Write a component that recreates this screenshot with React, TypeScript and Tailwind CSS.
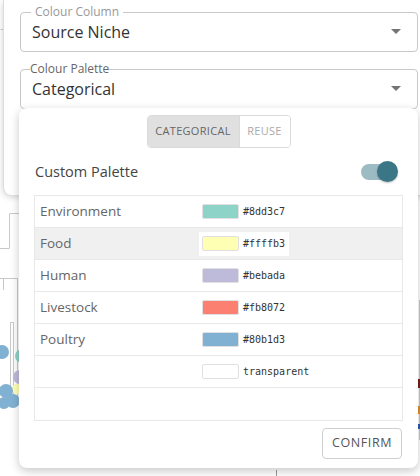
import { useState } from "react";

const rows = [
  { name: "Environment", color: "#8dd3c7" },
  { name: "Food", color: "#ffffb3" },
  { name: "Human", color: "#bebada" },
  { name: "Livestock", color: "#fb8072" },
  { name: "Poultry", color: "#80b1d3" },
  { name: "", color: "transparent" },
];

export default function App() {
  const [mode, setMode] = useState("categorical");
  const [custom, setCustom] = useState(true);

  return (
    <div className="relative h-[476px] w-[420px] overflow-hidden bg-white font-['Open_Sans',sans-serif]">
      <Backdrop />

      {/* settings card */}
      <div className="relative ml-[3px] h-[195px] w-[431px] rounded-bl-lg border-l border-[#dcdcdc] bg-white px-4 pt-3 shadow-[0_2px_6px_rgba(0,0,0,0.18)]">
        <Field label="Colour Column" value="Source Niche" />
        <div className="mt-[17px]">
          <Field label="Colour Palette" value="Categorical" tight />
        </div>
      </div>

      {/* palette menu */}
      <div className="absolute left-[19px] top-[108px] flex h-[360px] w-[399px] flex-col rounded-lg bg-white px-[15px] shadow-[0_3px_10px_rgba(0,0,0,0.22)]">
        <div className="mt-[7px] flex justify-center">
          <div className="flex h-[33px] overflow-hidden rounded border border-[#dadada] text-[11px] tracking-[0.3px]">
            <button
              onClick={() => setMode("categorical")}
              className={
                mode === "categorical"
                  ? "w-[91px] bg-[#e0e0e0] text-[#666]"
                  : "w-[91px] bg-white text-[#aaa]"
              }
            >
              CATEGORICAL
            </button>
            <button
              onClick={() => setMode("reuse")}
              className={
                mode === "reuse"
                  ? "w-[51px] border-l border-[#dadada] bg-[#e0e0e0] text-[#666]"
                  : "w-[51px] border-l border-[#dadada] bg-white text-[#aaa]"
              }
            >
              REUSE
            </button>
          </div>
        </div>

        <div className="mt-[13px] flex h-[22px] items-center justify-between pl-[1px] pr-[8px]">
          <span className="text-[14.5px] text-[#444]">Custom Palette</span>
          <button
            onClick={() => setCustom(!custom)}
            className="relative h-[16px] w-[34px] rounded-full bg-[#9dbbc3]"
          >
            <span className="absolute right-[-3px] top-[-3px] h-[21px] w-[21px] rounded-full bg-[#3b7686] shadow-[0_1px_2px_rgba(0,0,0,0.25)]" />
          </button>
        </div>

        <div className="mt-[12px] h-[226px] border border-[#e8e8e8]">
          {rows.map((r, i) => (
            <div
              key={i}
              className={
                i === 1
                  ? "flex h-[32px] items-center border-b border-[#e8e8e8] bg-[#f0f0f0]"
                  : "flex h-[32px] items-center border-b border-[#e8e8e8]"
              }
            >
              <div className="w-[164px] pl-[5px] text-[13.5px] text-[#666]">{r.name}</div>
              <div
                className={
                  i === 1
                    ? "flex h-[24px] items-center gap-[4px] bg-white pl-[3px] pr-[4px]"
                    : "flex h-[24px] items-center gap-[4px] pl-[3px]"
                }
              >
                <span
                  className="h-[15px] w-[37px] rounded-[2px] border border-[#e0e0e0]"
                  style={{ backgroundColor: r.color }}
                />
                <span className="font-['DejaVu_Sans_Mono',monospace] text-[10px] text-[#333]">
                  {r.color}
                </span>
              </div>
            </div>
          ))}
        </div>

        <div className="mt-[7px] flex justify-end pr-[1px]">
          <button className="h-[31px] w-[80px] rounded border border-[#cfcfcf] text-[12.5px] tracking-[0.6px] text-[#555]">
            CONFIRM
          </button>
        </div>
      </div>
    </div>
  );
}

function Field({
  label,
  value,
  tight,
}: {
  label: string;
  value: string;
  tight?: boolean;
}) {
  return (
    <div className="relative flex h-[40px] items-center rounded border border-[#c8c8c8] pl-[11px] pr-[16px]">
      <span
        className={
          tight
            ? "absolute left-[9px] top-[-9px] bg-white text-[12px] leading-[16px] text-[#666]"
            : "absolute left-[10px] top-[-9px] bg-white px-[4px] text-[12px] leading-[16px] text-[#999]"
        }
      >
        {label}
      </span>
      <span className="flex-1 text-[16px] text-[#333]">{value}</span>
      <svg width="10" height="5" viewBox="0 0 10 5" className="mb-[1px]">
        <path d="M0 0 L10 0 L5 5 Z" fill="#757575" />
      </svg>
    </div>
  );
}

// tree diagram peeking out behind the menu
function Backdrop() {
  return (
    <svg
      width="420"
      height="476"
      className="absolute left-0 top-0"
      fill="none"
      stroke="#c9c9c9"
      strokeWidth="1"
    >
      <path d="M0.5 29.5 H3" />
      <path d="M9.5 248 V213.5 H30" />
      <path d="M0 248.5 H9.5" />
      <path d="M0 278.5 H17.5 V400" />
      <path d="M3.5 278 V290" />
      <path d="M10.5 322 V395 M13.5 322 V395 M10.5 322.5 H13.5" />
      <circle cx="2" cy="352" r="7" fill="#80b1d3" stroke="none" />
      <circle cx="22" cy="356" r="7" fill="#8dd3c7" stroke="none" />
      <circle cx="20" cy="377" r="7" fill="#bebada" stroke="none" />
      <circle cx="17" cy="389" r="5" fill="#ffffb3" stroke="none" />
      <circle cx="6" cy="391" r="7" fill="#80b1d3" stroke="none" />
      <circle cx="13" cy="401" r="7" fill="#80b1d3" stroke="none" />
      <circle cx="4" cy="403" r="6" fill="#80b1d3" stroke="none" />
      <path d="M419.5 300 V440" />
      <rect x="418" y="379" width="2" height="9" fill="#7a1d12" stroke="none" />
      <rect x="418" y="406" width="2" height="8" fill="#e0912f" stroke="none" />
      <rect x="418" y="424" width="2" height="5" fill="#2a5bb5" stroke="none" />
      <path d="M276.5 470 V476" stroke="#9a9a9a" />
    </svg>
  );
}
